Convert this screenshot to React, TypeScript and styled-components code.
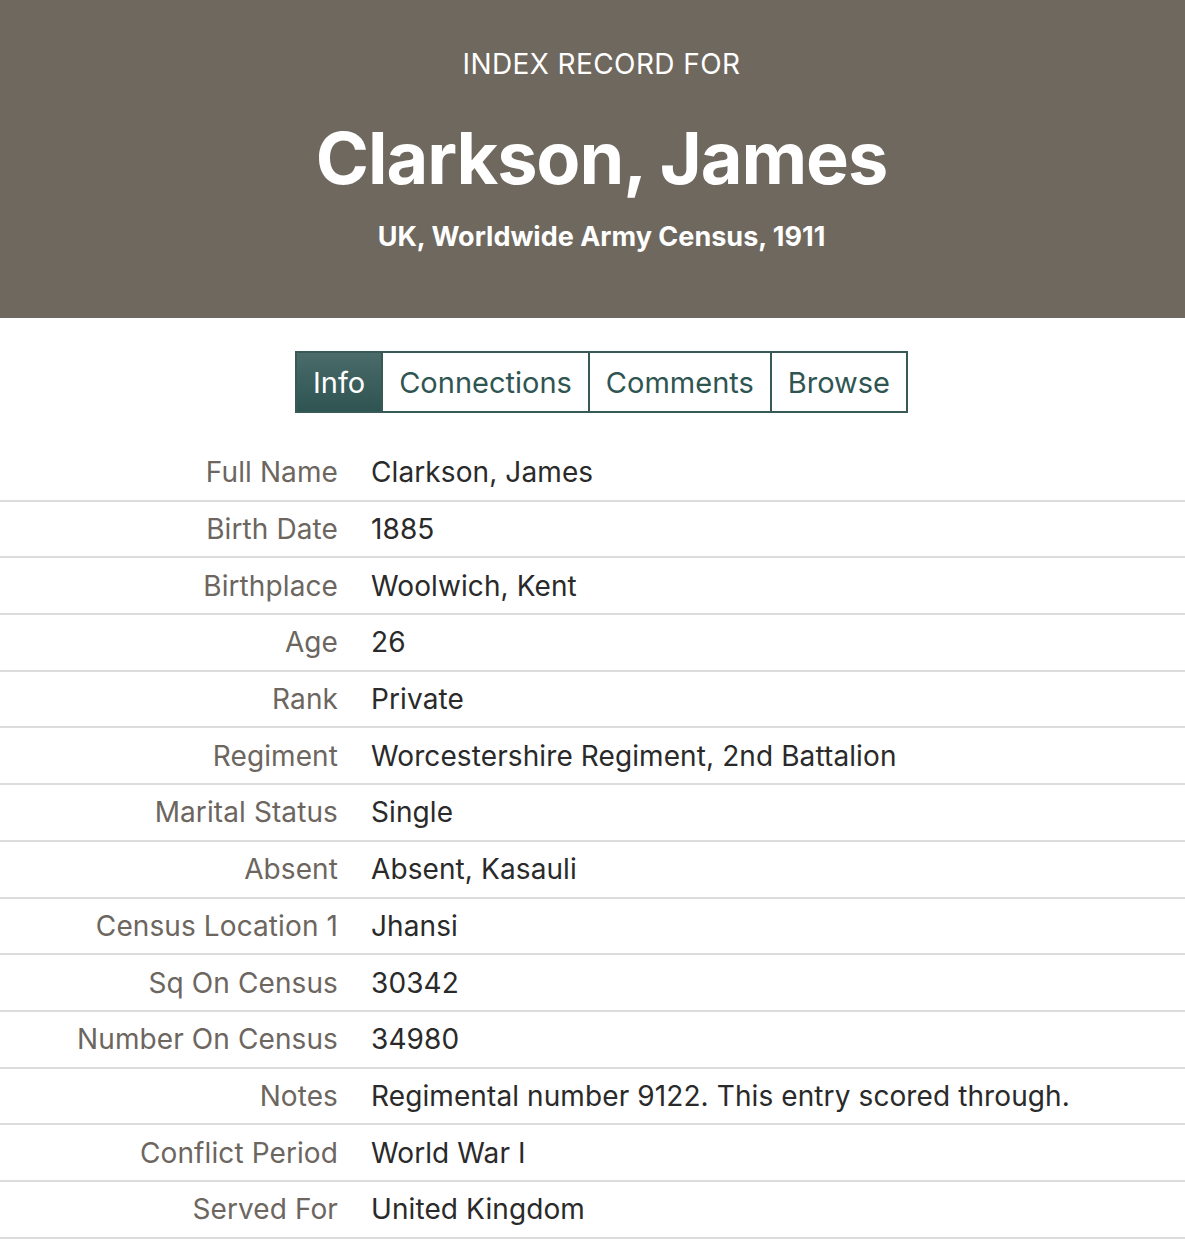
import React from "react";
import styled, { createGlobalStyle } from "styled-components";

const GlobalStyle = createGlobalStyle`
  body {
    margin: 0;
    background: #ffffff;
    font-family: Inter, "Liberation Sans", Arial, sans-serif;
  }
`;

const Header = styled.header`
  background: #6f685e;
  color: #ffffff;
  height: 318px;
  box-sizing: border-box;
  padding: 46px 0 0 18px;
  text-align: center;
`;

const Eyebrow = styled.div`
  font-size: 28px;
  line-height: 36px;
  letter-spacing: 0.4px;
`;

const Title = styled.h1`
  margin: 32px 0 0;
  font-size: 72px;
  line-height: 88px;
  font-weight: 700;
  letter-spacing: -1.1px;
`;

const Subtitle = styled.div`
  margin-top: 17px;
  font-size: 27px;
  line-height: 36px;
  font-weight: 700;
  letter-spacing: 0;
`;

const TabBar = styled.nav`
  display: flex;
  justify-content: center;
  padding: 33px 0 32px 18px;
`;

const Tab = styled.button<{ $active?: boolean }>`
  height: 62px;
  padding: 0 16px;
  margin-left: ${(p) => (p.$active ? "0" : "-2px")};
  border: 2px solid #375a57;
  font-family: Inter, "Liberation Sans", Arial, sans-serif;
  font-size: 29px;
  letter-spacing: 0;
  color: ${(p) => (p.$active ? "#ffffff" : "#2f5552")};
  background: ${(p) =>
    p.$active ? "linear-gradient(#4a6b69, #2e5452)" : "#ffffff"};
  cursor: pointer;
`;

const Table = styled.div`
  display: flex;
  flex-direction: column;
`;

const Row = styled.div`
  display: grid;
  grid-template-columns: 338px 1fr;
  column-gap: 33px;
  align-items: center;
  height: 56.7px;
  box-sizing: border-box;
  border-bottom: 2px solid #dcdcdc;
  font-size: 28px;
  letter-spacing: 0.1px;
`;

const Label = styled.div`
  text-align: right;
  color: #6c665f;
`;

const Value = styled.div`
  color: #2a2a2a;
`;

const rows: [string, string][] = [
  ["Full Name", "Clarkson, James"],
  ["Birth Date", "1885"],
  ["Birthplace", "Woolwich, Kent"],
  ["Age", "26"],
  ["Rank", "Private"],
  ["Regiment", "Worcestershire Regiment, 2nd Battalion"],
  ["Marital Status", "Single"],
  ["Absent", "Absent, Kasauli"],
  ["Census Location 1", "Jhansi"],
  ["Sq On Census", "30342"],
  ["Number On Census", "34980"],
  ["Notes", "Regimental number 9122. This entry scored through."],
  ["Conflict Period", "World War I"],
  ["Served For", "United Kingdom"],
];

const tabs = ["Info", "Connections", "Comments", "Browse"];

export default function App() {
  return (
    <>
      <GlobalStyle />
      <Header>
        <Eyebrow>INDEX RECORD FOR</Eyebrow>
        <Title>Clarkson, James</Title>
        <Subtitle>UK, Worldwide Army Census, 1911</Subtitle>
      </Header>
      <TabBar>
        {tabs.map((t, i) => (
          <Tab key={t} $active={i === 0}>
            {t}
          </Tab>
        ))}
      </TabBar>
      <Table>
        {rows.map(([label, value]) => (
          <Row key={label}>
            <Label>{label}</Label>
            <Value>{value}</Value>
          </Row>
        ))}
      </Table>
    </>
  );
}
